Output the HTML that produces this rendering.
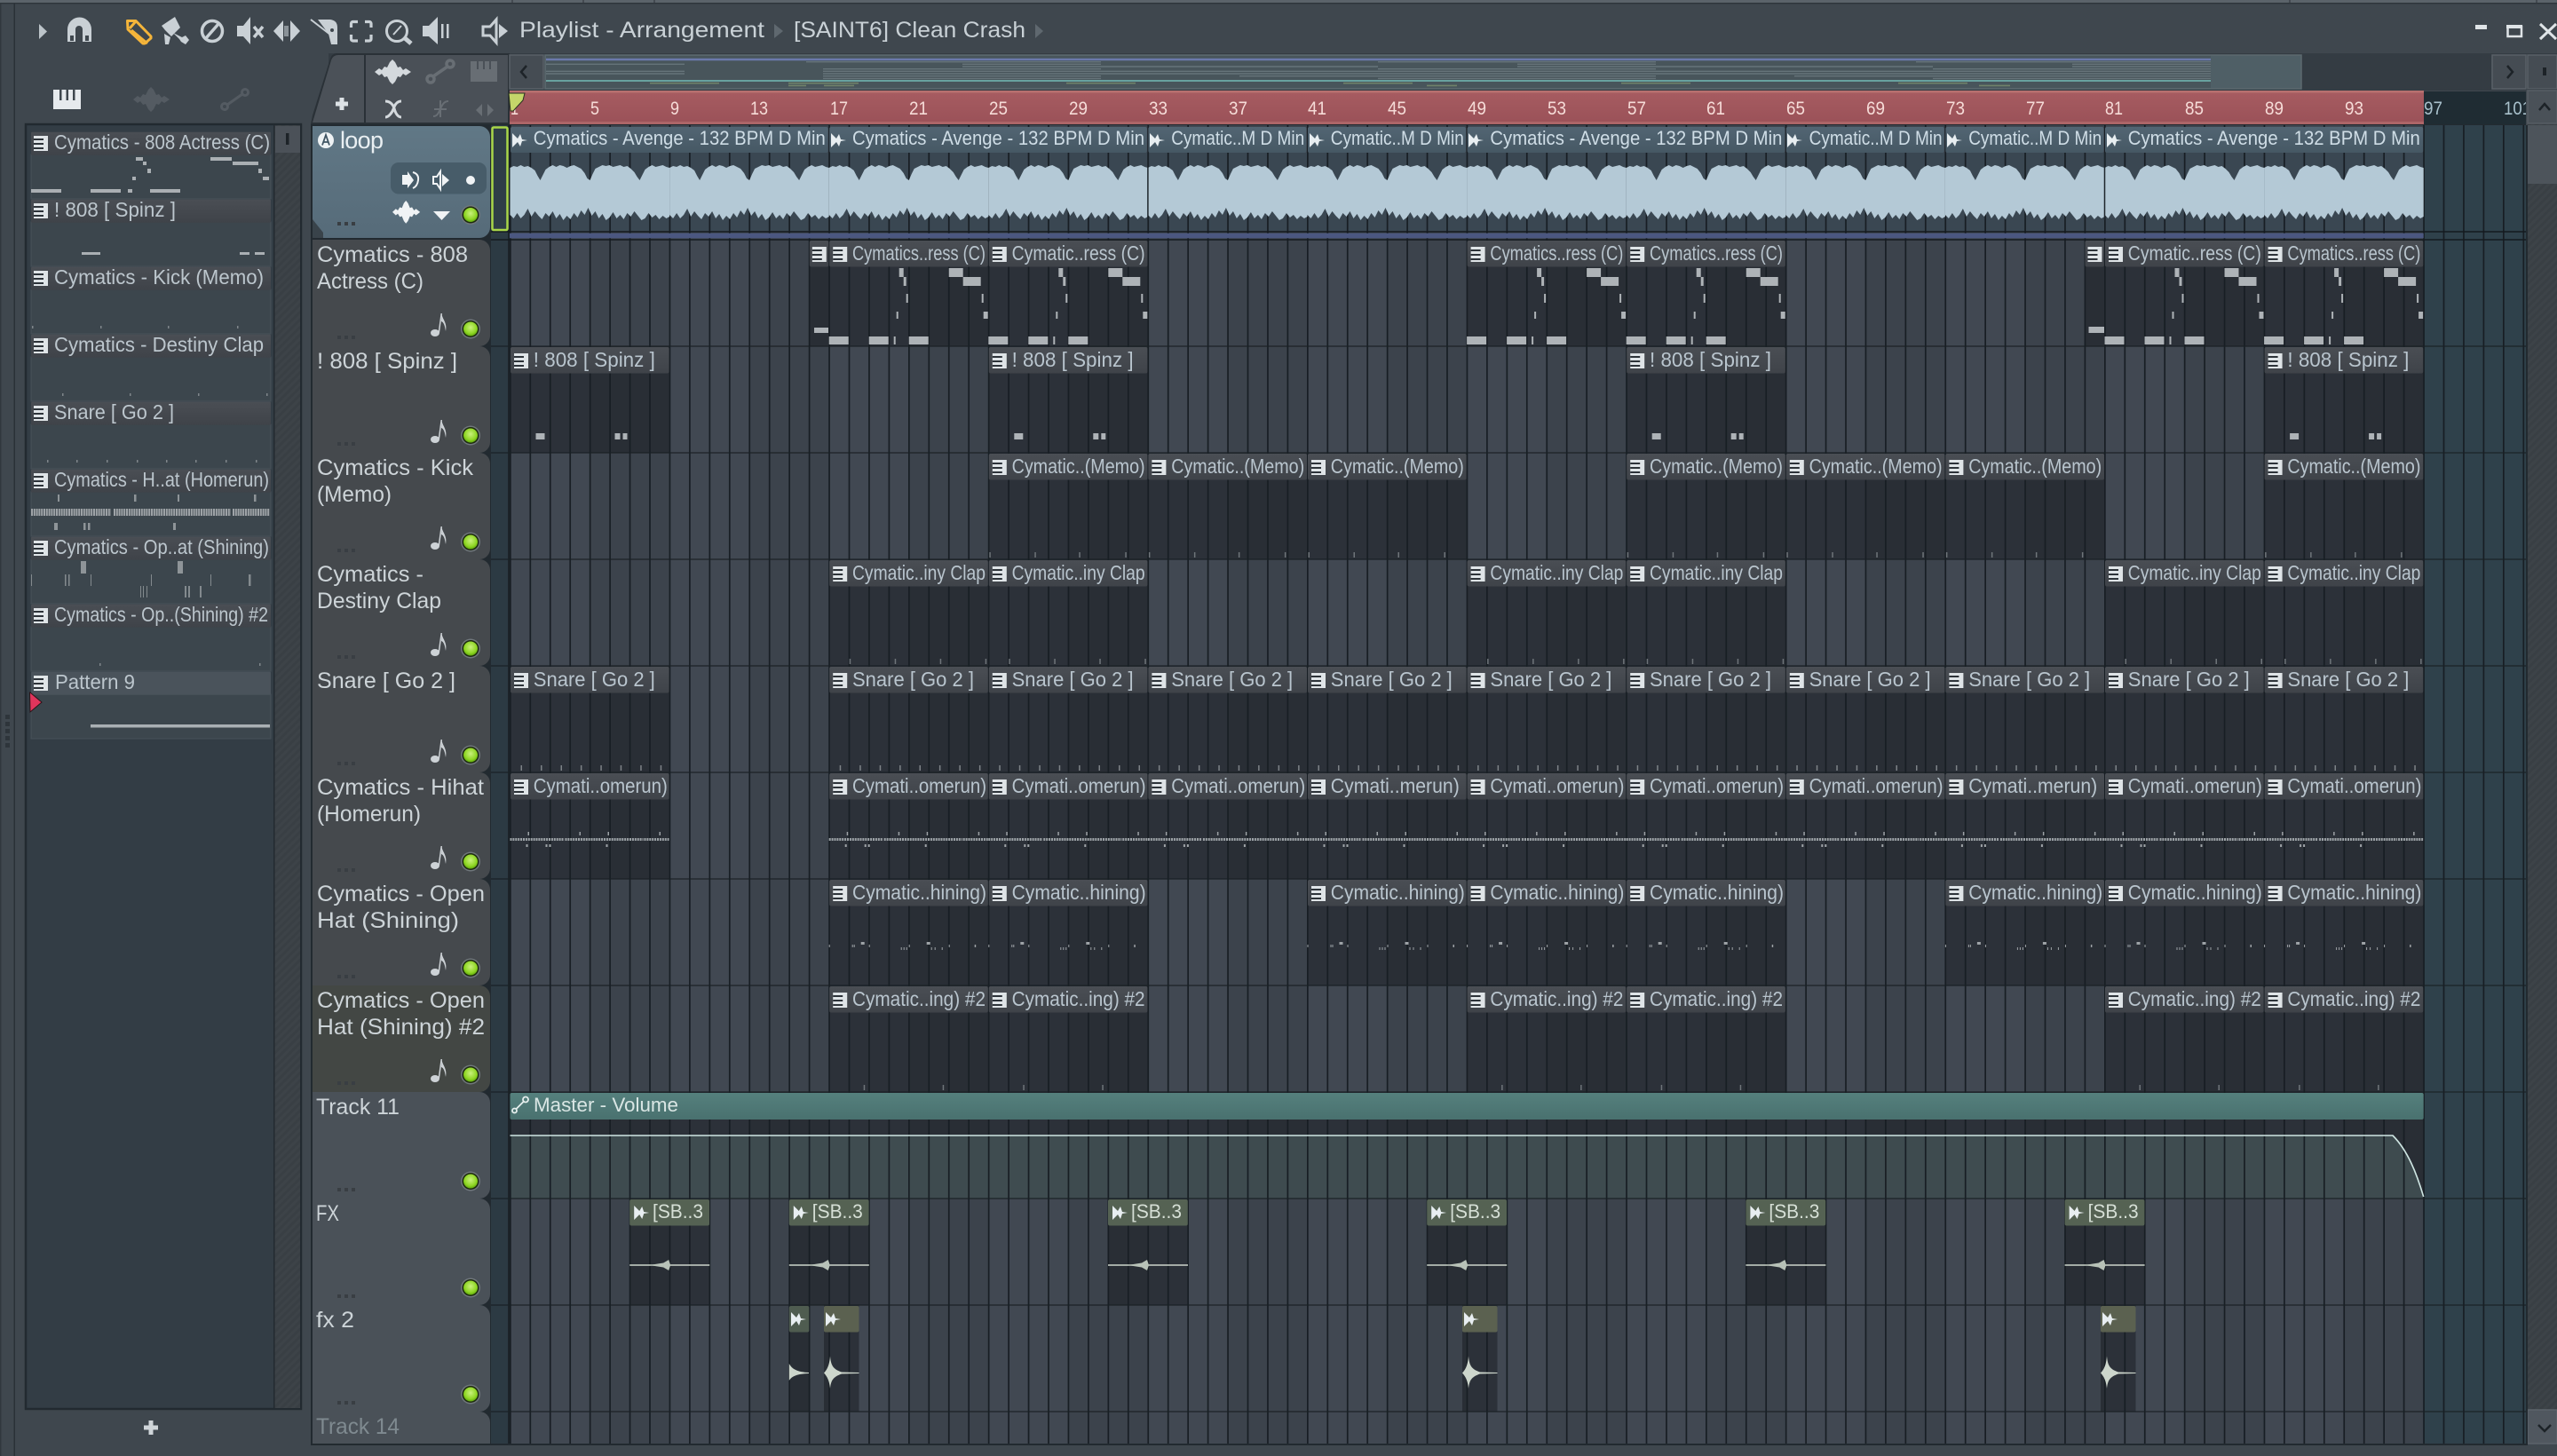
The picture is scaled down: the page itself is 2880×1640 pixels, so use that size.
<!DOCTYPE html>
<html><head><meta charset="utf-8"><title>Playlist - Arrangement</title>
<style>
html,body{margin:0;padding:0;background:#3f474e;width:2880px;height:1640px;overflow:hidden}
svg{display:block;position:absolute;left:0;top:0}
text{font-family:"Liberation Sans",sans-serif;white-space:pre}
.c{font-size:23px;fill:#b9c5ce}
.a{font-size:22px;fill:#cfdde6}
.h{font-size:25px;fill:#cdd4d8}
.r{font-size:21px;fill:#f6dcd8}
.p{font-size:23px;fill:#bcc6cd}
.g{font-size:22px;fill:#d6dfd6}
</style></head><body>
<svg width="2880" height="1640" viewBox="0 0 2880 1640" xmlns="http://www.w3.org/2000/svg">
<defs>
<linearGradient id="tg" x1="0" y1="0" x2="0" y2="1"><stop offset="0" stop-color="#4a4e54"/><stop offset="1" stop-color="#3f4349"/></linearGradient>
<linearGradient id="ag" x1="0" y1="0" x2="0" y2="1"><stop offset="0" stop-color="#526573"/><stop offset="1" stop-color="#465864"/></linearGradient>
<linearGradient id="tl" x1="0" y1="0" x2="0" y2="1"><stop offset="0" stop-color="#55807d"/><stop offset="1" stop-color="#49716f"/></linearGradient>
<linearGradient id="rg" x1="0" y1="0" x2="0" y2="1"><stop offset="0" stop-color="#a75c61"/><stop offset="1" stop-color="#9a5158"/></linearGradient>
<linearGradient id="lp" x1="0" y1="0" x2="0" y2="1"><stop offset="0" stop-color="#617886"/><stop offset="1" stop-color="#566b79"/></linearGradient>
<radialGradient id="ld" cx=".5" cy=".4" r=".6"><stop offset="0" stop-color="#c9f07c"/><stop offset=".7" stop-color="#8fd624"/><stop offset="1" stop-color="#5fa80c"/></radialGradient>
<pattern id="ht" width="6" height="6" patternUnits="userSpaceOnUse" patternTransform="rotate(45)"><rect width="6" height="6" fill="#3d4348"/><rect width="3" height="6" fill="#393f44"/></pattern>
<g id="pi"><rect width="16" height="17" fill="#dfe4e7"/><path d="M0 3h11v2H0zM0 8h11v2H0zM0 13h11v2H0z" fill="#2d3339"/></g>
<g id="t"><rect width="178.6" height="29.5" y="1" rx="2" fill="url(#tg)"/><use href="#pi" x="4" y="8"/></g>
<g id="ts"><rect width="21.4" height="29.5" y="1" rx="2" fill="url(#tg)"/><use href="#pi" x="3" y="8"/></g>
<path id="ar" d="M0-8 6-2 9-7 11-1 17 0 11 1 9 7 6 2 0 8Z" fill="#e8eef1"/>
<g id="wi"><path d="M0 14 5 10 8 12 11 8 14 9 17 3 20 0 23 3 26 9 29 8 32 12 35 10 41 14 35 18 32 16 29 20 26 19 23 25 20 28 17 25 14 19 11 20 8 16 5 18Z"/></g>
<g id="nt" fill="#cdd2d6"><ellipse cx="5" cy="21" rx="5" ry="4"/><path d="M8.500 21 11.500-1H13L10 21Z"/><path d="M12.500-1C13 6 19 9 17 19 C16 13 15 9 12 8Z"/></g>
<g id="led"><circle r="11" fill="#70777c"/><circle r="9.500" fill="#1d2a10"/><circle r="8" fill="url(#ld)"/></g>
<g id="dt"><path d="M380 108h4v4h-4zM388 108h4v4h-4zM396 108h4v4h-4z" fill="#393e43"/></g>
<path id="hd" d="M352 0H540a12 12 0 0 1 12 12V108a12 12 0 0 1-12 12H352Z"/>
<g id="n1" fill="#aeb3b7"><path d="M0 109h22v9H0zM45 109h22v9H45zM73 109h2v9h-2zM90 109h22v9H90zM76 81h2v8h-2zM87 61h2v10h-2zM84 42h3v10h-3zM79 32h5v10h-5zM135 32h16v10h-16zM151 42h20v10h-20zM172 61h2v10h-2zM174 81h5v8h-5z"/></g>
<g id="n2" fill="#aeb3b7"><path d="M29 98h10v7H29zM118 98h6v7h-6zM127 98h5v7h-5z"/></g>
<path id="n3" fill="#6f757a" d="M1 112h1.500v6H1zM52 112h1.500v6H52zM102 112h1.500v6H102zM154 112h1.500v6H154z"/>
<path id="n4" fill="#6f757a" d="M23 112h1.500v6H23zM74 112h1.500v6H74zM125 112h1.500v6H125zM176 112h1.500v6H176z"/>
<path id="n5" fill="#7d8287" d="M12 112h1.500v6H12zM34.500 112h1.500v6H34.500zM57 112h1.500v6H57zM79.400 112h1.500v6H79.400zM101.800 112h1.500v6H101.800zM124.200 112h1.500v6H124.200zM146.700 112h1.500v6H146.700zM169.200 112h1.500v6H169.200z"/>
<g id="n6"><path fill="none" stroke="#9ba1a5" stroke-width="3" stroke-dasharray="2 .9" d="M0 75.500H61M62 75.500H150M151 75.500H179"/><path fill="#9da2a6" d="M20 67h1.500v4H20zM78 67h1.500v4H78zM110 67h1.500v4H110zM168 67h1.500v4H168zM18 81h2v3h-2zM40 81h2v3h-2zM44 81h2v3h-2zM108 81h2v3h-2z"/></g>
<path id="n7" fill="#9da2a6" d="M36 71h4v3h-4zM110 71h4v3h-4zM0 74h1v3H0zM26 74h1v3h-1zM28 74h1v3h-1zM45 74h1v3h-1zM90 74h1v3h-1zM135 74h1v3h-1zM164 74h1.500v3H164zM81 77h1v3h-1zM84 77h1v3h-1zM87 77h1v3h-1zM115 77h1v3h-1zM119 77h1v3h-1zM127 77h1v3h-1z"/>
<path id="n8" fill="#6f757a" d="M39 112h1.500v6H39zM128 112h1.500v6H128z"/>
<path id="wt" fill="#b4c9d6" d="M0 189L4 187 8 188 12 186 16 188 20 187 24 189 28 192 31 198 34 203 37 197 40 191 44 188 48 186 52 188 56 186 60 187 64 189 68 187 72 186 76 188 80 190 84 195 87 201 90 203 93 196 96 190 100 188 104 186 108 187 112 186 116 188 120 187 124 186 128 188 132 187 136 190 140 194 143 199 146 203 149 197 152 191 156 188 160 186 164 188 168 187 172 186 176 188 179.600 189L179.600 244 176 246 172 243 168 247 164 242 160 245 156 240 152 246 148 248 144 243 140 238 136 244 132 240 128 247 124 242 120 246 116 239 112 245 108 248 104 241 100 246 96 238 92 243 88 234 84 242 80 237 76 245 72 240 68 247 64 243 60 248 56 241 52 246 48 238 44 244 40 240 36 247 32 243 28 238 24 244 20 235 16 242 12 246 8 240 4 246 0 242Z"/>
<g id="sb"><rect y="1" width="89.800" height="29.500" rx="2" fill="#556253"/><use href="#ar" x="5" y="16"/><path d="M0 75H90" stroke="#cdd6cc" stroke-width="1.500"/><path d="M22 75 38 72.500 44 69 46 75 44 81 38 77.500Z" fill="#b8c2b8"/></g>
</defs>

<!-- window background -->
<rect width="2880" height="1640" fill="#3f474e"/>
<rect width="2880" height="3" fill="#5b636a"/>
<rect y="3" width="2880" height="1.500" fill="#2f363c"/>
<path d="M577 0v3M657 0v3M737 0v3M2579 0v3M2857 0v3" stroke="#3c4349" stroke-width="1.500"/>
<rect x="0" y="4" width="1.500" height="1636" fill="#30373d"/>
<rect x="15.500" y="4" width="1.500" height="1636" fill="#2a3137"/>
<path d="M6 805h5v5H6zM6 813h5v5H6zM6 821h5v5H6zM6 829h5v5H6zM6 837h5v5H6z" fill="#2e353b"/>

<!-- top icons -->
<g fill="#c9d0d5">
<polygon points="44,27 53,35.500 44,44" fill="#bcc4c9"/>
<path d="M76 47V33a13.500 13.500 0 0 1 27 0V47H93V33a3.500 3.500 0 0 0-8 0V47Z"/>
<path d="M79 40h4v6h-4zM96 40h4v6h-4z" fill="#3f474e"/>
<path d="M143.500 23.500H153L170 41V43L163 49H161L144 33ZM146 32l7-8M148 34 166 49" fill="none" stroke="#f5b53a" stroke-width="3" stroke-linejoin="round"/>
<path d="M182 29 197 19 203 31 193 41 186 34ZM195 37 205 42 209 40 213 45 209 50 204 47 202 44ZM185 38 192 42 190 50 186 50Z"/>
<circle cx="239" cy="35" r="11.500" fill="none" stroke="#c9d0d5" stroke-width="3.500"/>
<path d="M232 43 246 27" stroke="#c9d0d5" stroke-width="3.500"/>
<path d="M267 29H274L282 19V50L274 41H267Z"/>
<path d="M286 30 296 42M296 30 286 42" stroke="#c9d0d5" stroke-width="3.500"/>
<polygon points="308,35 319,23 319,47"/><polygon points="338,35 327,23 327,47"/>
<path d="M320 29h5v12h-5z" opacity=".55"/>
<path d="M350 22 372 39" stroke="#c9d0d5" stroke-width="2"/>
<path d="M358 22H372Q380 23 380 31V50H373L370 38Z"/><circle cx="374" cy="34" r="2" fill="#3f474e"/>
<path d="M395.500 31V26.500a2 2 0 0 1 2-2H403M411 24.500H416a2 2 0 0 1 2 2V31M418 39V44a2 2 0 0 1-2 2H411M403 46H397.500a2 2 0 0 1-2-2V39" fill="none" stroke="#c9d0d5" stroke-width="3.200"/>
<circle cx="447" cy="35" r="11.500" fill="none" stroke="#c9d0d5" stroke-width="3"/>
<path d="M443 39 452 29" stroke="#c9d0d5" stroke-width="2"/>
<path d="M456 43 463 49" stroke="#c9d0d5" stroke-width="5"/>
<path d="M476 29H483L493 19V50L483 41H476Z"/>
<path d="M497 27h2.500v16H497zM503 27h2.500v16H503z"/>
<path d="M544 30H552L559 22V48L552 40H544Z" fill="none" stroke="#c9d0d5" stroke-width="3"/>
<polygon points="562,27 572,35 562,43"/>
<path d="M2788 28h13v5h-13z" fill="#dfe4e7"/>
<path d="M2824.500 30h15.500v11h-15.500z" fill="none" stroke="#dfe4e7" stroke-width="2.500"/><path d="M2823 28h18v4h-18z" fill="#dfe4e7"/>
<path d="M2861 27 2879 44M2879 27 2861 44" stroke="#dfe4e7" stroke-width="3"/>
</g>
<text x="585" y="42" font-size="25" fill="#c9d1d6" textLength="276" lengthAdjust="spacingAndGlyphs">Playlist - Arrangement</text>
<polygon points="872,27 882,35 872,43" fill="#5f686f"/>
<text x="894" y="42" font-size="25" fill="#c9d1d6" textLength="261" lengthAdjust="spacingAndGlyphs">[SAINT6] Clean Crash</text>
<polygon points="1166,27 1175,35 1166,43" fill="#5f686f"/>

<!-- toolbar strip -->
<rect x="370" y="60" width="2510" height="42" fill="#343c43"/>
<rect x="350" y="139" width="224" height="3" fill="#252c32"/>
<path d="M350 140 352 130 372 66Q374 60 380 60H574V140Z" fill="#2a3137"/>
<path d="M352 138 373 68Q375 62 381 62H410V138Z" fill="#4b5158"/>
<rect x="412" y="62" width="160" height="76" fill="#4a5057"/>
<path d="M378 114.500h14v5h-14zM382.500 110h5v14h-5z" fill="#dde2e6"/>
<use href="#wi" x="422" y="67" fill="#d4d9dd"/>
<g fill="none" stroke="#686e74" stroke-width="3.500"><circle cx="485" cy="89" r="4"/><circle cx="507" cy="72" r="4"/><path d="M488 86 504 75"/></g>
<path d="M530 69h30v23h-30z" fill="#686e74"/><path d="M537 69h2v9h-2zM544 69h2v9h-2zM551 69h2v9h-2z" fill="#4a5057"/>
<path d="M434 114C442 114 444 122 444 122S446 132 452 132M452 114C446 114 444 120 443 123S438 132 434 132" fill="none" stroke="#d4d9dd" stroke-width="3"/>
<path d="M488 131C497 131 495 114 505 114M489 123h14M496 113v19" fill="none" stroke="#686e74" stroke-width="2"/>
<path d="M536 124 543 117V131ZM556 124 549 117V131Z" fill="#686e74"/>
<rect x="574" y="62" width="38" height="38" fill="#454c53" stroke="#596067" stroke-width="1.500"/>
<path d="M593 74 587 81 593 88" fill="none" stroke="#1d2328" stroke-width="2.500"/>

<!-- overview -->
<rect x="614" y="62" width="1978" height="38" fill="#4f5f66" stroke="#5d696f" stroke-width="1.500"/>
<rect x="615" y="63" width="1875" height="36" fill="#48555b"/>
<path d="M615 67H2490" stroke="#6b79ab" stroke-width="2.500"/>
<path d="M908 69.700H1240M1552 69.700H1865M2158 69.700H2490M615 72.300H771M1084 72.300H1240M1709 72.300H1865M2334 72.300H2490M1084 75H1552M1709 75H2177M2334 75H2490M927 77.700H1240M1552 77.700H1865M2177 77.700H2490M615 80.300H771M927 80.300H2490M615 83H771M927 83H2490M927 85.700H1240M1396 85.700H1865M2021 85.700H2490M927 88.400H1240M1552 88.400H1865M2177 88.400H2490" stroke="#66747a" stroke-width="1.400"/>
<path d="M615 91H2490" stroke="#72bcb6" stroke-width="1.600"/>
<path d="M732 93.700H810M888 93.700H967M1201 93.700H1279M1513 93.700H1591M1826 93.700H1904M2138 93.700H2216" stroke="#70826a" stroke-width="1.600"/>
<path d="M888 96.400H908M928 96.400H962M1607 96.400H1641M2229 96.400H2264" stroke="#70826a" stroke-width="1.600"/>
<rect x="2807" y="62" width="38" height="38" fill="#454c53" stroke="#596067" stroke-width="1.500"/>
<path d="M2824 74 2830 81 2824 88" fill="none" stroke="#1d2328" stroke-width="2.500"/>
<rect x="2847" y="62" width="33" height="38" fill="#454c53" stroke="#596067" stroke-width="1.500"/>
<rect x="2864" y="76" width="4" height="9" fill="#1d2328"/>

<!-- left picker -->
<path d="M60 101h31v22H60z" fill="#e6eaed"/><path d="M67 101h2.500v12H67zM74.500 101h2.500v12h-2.500zM82 101h2.500v12H82z" fill="#3f474e"/>
<use href="#wi" x="150" y="98" fill="#545b62"/>
<g fill="none" stroke="#545b62" stroke-width="3"><circle cx="253" cy="120" r="3.500"/><circle cx="276" cy="104" r="3.500"/><path d="M256 118 273 106"/></g>
<rect x="29" y="140" width="310" height="1447" fill="#333d45" stroke="#222a30" stroke-width="2.500"/>
<rect x="309" y="141" width="29" height="1445" fill="url(#ht)"/>
<rect x="308" y="141" width="1.500" height="1445" fill="#222a30"/>
<rect x="310" y="142" width="28" height="30" fill="#4b5158"/>
<rect x="322" y="150" width="3.500" height="13" fill="#1d2328"/>
<g fill="#3c464d" stroke="#475159" stroke-width="1">
<rect x="35" y="174" width="270" height="50"/><rect x="35" y="250" width="270" height="50"/><rect x="35" y="326" width="270" height="50"/><rect x="35" y="402" width="270" height="50"/><rect x="35" y="478" width="270" height="50"/><rect x="35" y="554" width="270" height="50"/><rect x="35" y="630" width="270" height="50"/><rect x="35" y="706" width="270" height="50"/><rect x="35" y="782" width="270" height="50"/>
</g>
<g fill="url(#tg)"><rect x="35" y="148.700" width="270" height="26" rx="1"/><rect x="35" y="224.700" width="270" height="26" rx="1"/><rect x="35" y="300.700" width="270" height="26" rx="1"/><rect x="35" y="376.700" width="270" height="26" rx="1"/><rect x="35" y="452.700" width="270" height="26" rx="1"/><rect x="35" y="528.700" width="270" height="26" rx="1"/><rect x="35" y="604.700" width="270" height="26" rx="1"/><rect x="35" y="680.700" width="270" height="26" rx="1"/></g>
<rect x="35" y="756.700" width="270" height="26" rx="1" fill="#4a535b"/>
<g><use href="#pi" x="38" y="153"/><use href="#pi" x="38" y="229"/><use href="#pi" x="38" y="305"/><use href="#pi" x="38" y="381"/><use href="#pi" x="38" y="457"/><use href="#pi" x="38" y="533"/><use href="#pi" x="38" y="609"/><use href="#pi" x="38" y="685"/><use href="#pi" x="38" y="761"/></g>
<text class="p" x="61" y="168" textLength="243" lengthAdjust="spacingAndGlyphs">Cymatics - 808 Actress (C)</text>
<text class="p" x="61" y="244" textLength="137" lengthAdjust="spacingAndGlyphs">! 808 [ Spinz ]</text>
<text class="p" x="61" y="320" textLength="236" lengthAdjust="spacingAndGlyphs">Cymatics - Kick (Memo)</text>
<text class="p" x="61" y="396" textLength="236" lengthAdjust="spacingAndGlyphs">Cymatics - Destiny Clap</text>
<text class="p" x="61" y="472" textLength="135" lengthAdjust="spacingAndGlyphs">Snare [ Go 2 ]</text>
<text class="p" x="61" y="548" textLength="242" lengthAdjust="spacingAndGlyphs">Cymatics - H..at (Homerun)</text>
<text class="p" x="61" y="624" textLength="242" lengthAdjust="spacingAndGlyphs">Cymatics - Op..at (Shining)</text>
<text class="p" x="61" y="700" textLength="241" lengthAdjust="spacingAndGlyphs">Cymatics - Op..(Shining) #2</text>
<text class="p" x="62" y="776" textLength="90" lengthAdjust="spacingAndGlyphs">Pattern 9</text>
<path fill="#aaafb3" d="M35 213h34v4H35zM102 213h34v4h-34zM144 213h5v4h-5zM169 213h34v4h-34zM149 199h4v4h-4zM166 190h4v5h-4zM153 177h8v4h-8zM161 182h4v4h-4zM237 177h24v4h-24zM262 182h29v4h-29zM291 190h4v5h-4zM296 199h7v4h-7zM92 284h21v3H92zM270 284h11v3h-11zM287 284h11v3h-11z"/>
<path fill="#7f868b" d="M36 367h1.500v3H36zM113 367h1.500v3H113zM189 367h1.500v3H189zM267 367h1.500v3H267zM70 443h1.500v3H70zM146 443h1.500v3H146zM223 443h1.500v3H223zM300 443h1.500v3H300zM53 518h1.500v3H53zM86 518h1.500v3H86zM120 518h1.500v3H120zM154 518h1.500v3H154zM187 518h1.500v3H187zM220 518h1.500v3H220zM254 518h1.500v3H254zM288 518h1.500v3H288zM112 747h1.500v3H112zM292 747h1.500v3H292z"/>
<path fill="none" stroke="#9ea3a7" stroke-width="8" stroke-dasharray="2 .8" d="M35 577H125M128 577H260M262 577H304"/>
<path fill="#8e9498" d="M65 557h2v8h-2zM151 557h2.500v8H151zM200 557h2v8h-2zM286 557h2.500v8H286zM61 589h4v8h-4zM94 589h2.500v8H94zM99 589h2.500v8H99zM195 589h3v8h-3zM91 632h6v14h-6zM200 632h6v14h-6z"/>
<path fill="#838a8e" d="M35 647h1v13h-1zM73 647h1.500v13H73zM77 647h1.500v13H77zM102 647h1v13h-1zM170 647h1v13h-1zM237 647h1v13h-1zM280 647h2.500v13H280zM158 660h1v13h-1zM161 660h1v13h-1zM165 660h1v13h-1zM208 660h2v13h-2zM212 660h2v13h-2zM225 660h2v13h-2z"/>
<rect x="102" y="816" width="202" height="3.500" fill="#aab0b4"/>
<path d="M34 780 47 791 34 802 33.500 780Z" fill="#e0355c" stroke="#2a1418" stroke-width="1"/>
<path d="M162 1605.500h16v5h-16zM167.500 1600h5v16h-5z" fill="#cfd5d9"/>

<!-- playlist main -->
<rect x="350" y="140" width="2497" height="1488" fill="#222a30"/>
<rect x="574" y="141" width="2156" height="1485" fill="#3c434c"/>
<line x1="574.500" y1="883.500" x2="2730" y2="883.500" stroke="#414852" stroke-width="1485" stroke-dasharray="89.800 89.800"/>
<rect x="2730" y="141" width="115" height="1485" fill="#2f414b"/>
<rect x="553" y="141" width="20" height="1485" fill="#2c3a43"/>

<!-- ruler -->
<rect x="574" y="102" width="2156" height="38" fill="url(#rg)"/>
<rect x="574" y="102" width="2156" height="2.500" fill="#b8706f"/>
<rect x="574" y="137" width="2156" height="3" fill="#ad6568"/>
<rect x="2730" y="103" width="117" height="37" fill="#1f2c33"/>
<g>
<text class="r" x="575" y="129" textLength="9" lengthAdjust="spacingAndGlyphs">1</text>
<text class="r" x="665" y="129" textLength="10" lengthAdjust="spacingAndGlyphs">5</text>
<text class="r" x="755" y="129" textLength="10" lengthAdjust="spacingAndGlyphs">9</text>
<text class="r" x="845" y="129" textLength="20" lengthAdjust="spacingAndGlyphs">13</text>
<text class="r" x="935" y="129" textLength="20" lengthAdjust="spacingAndGlyphs">17</text>
<text class="r" x="1024" y="129" textLength="21" lengthAdjust="spacingAndGlyphs">21</text>
<text class="r" x="1114" y="129" textLength="21" lengthAdjust="spacingAndGlyphs">25</text>
<text class="r" x="1204" y="129" textLength="21" lengthAdjust="spacingAndGlyphs">29</text>
<text class="r" x="1294" y="129" textLength="21" lengthAdjust="spacingAndGlyphs">33</text>
<text class="r" x="1384" y="129" textLength="21" lengthAdjust="spacingAndGlyphs">37</text>
<text class="r" x="1473" y="129" textLength="21" lengthAdjust="spacingAndGlyphs">41</text>
<text class="r" x="1563" y="129" textLength="21" lengthAdjust="spacingAndGlyphs">45</text>
<text class="r" x="1653" y="129" textLength="21" lengthAdjust="spacingAndGlyphs">49</text>
<text class="r" x="1743" y="129" textLength="21" lengthAdjust="spacingAndGlyphs">53</text>
<text class="r" x="1833" y="129" textLength="21" lengthAdjust="spacingAndGlyphs">57</text>
<text class="r" x="1922" y="129" textLength="21" lengthAdjust="spacingAndGlyphs">61</text>
<text class="r" x="2012" y="129" textLength="21" lengthAdjust="spacingAndGlyphs">65</text>
<text class="r" x="2102" y="129" textLength="21" lengthAdjust="spacingAndGlyphs">69</text>
<text class="r" x="2192" y="129" textLength="21" lengthAdjust="spacingAndGlyphs">73</text>
<text class="r" x="2282" y="129" textLength="21" lengthAdjust="spacingAndGlyphs">77</text>
<text class="r" x="2371" y="129" textLength="20" lengthAdjust="spacingAndGlyphs">81</text>
<text class="r" x="2461" y="129" textLength="21" lengthAdjust="spacingAndGlyphs">85</text>
<text class="r" x="2551" y="129" textLength="21" lengthAdjust="spacingAndGlyphs">89</text>
<text class="r" x="2641" y="129" textLength="21" lengthAdjust="spacingAndGlyphs">93</text>
<text class="r" x="2730" y="129" textLength="21" style="fill:#a9c1cc" lengthAdjust="spacingAndGlyphs">97</text>
<text class="r" x="2820" y="129" textLength="31" style="fill:#a9c1cc" lengthAdjust="spacingAndGlyphs">101</text>
</g>
<path d="M573 105H591L589 113 578 125 575 125Z" fill="#c5d66a" stroke="#2a3320" stroke-width="1"/>

<!-- clip bodies -->
<path fill="#0c1014" fill-opacity=".4" d="M911.300 270H1292.900V390H911.300ZM1652.100 270H2011.300V390H1652.100ZM2348 270H2729.700V390H2348ZM574.500 390H754.100V510H574.500ZM1113.300 390H1292.900V510H1113.300ZM1831.700 390H2011.300V510H1831.700ZM2550.100 390H2729.700V510H2550.100ZM1113.300 510H1652.100V630H1113.300ZM1831.700 510H2370.500V630H1831.700ZM2550.100 510H2729.700V630H2550.100ZM933.700 630H1292.900V750H933.700ZM1652.100 630H2011.300V750H1652.100ZM2370.500 630H2729.700V750H2370.500ZM574.500 750H754.100V870H574.500ZM933.700 750H2729.700V870H933.700ZM574.500 870H754.100V990H574.500ZM933.700 870H2729.700V990H933.700ZM933.700 990H1292.900V1110H933.700ZM1472.500 990H2011.300V1110H1472.500ZM2190.900 990H2729.700V1110H2190.900ZM933.700 1110H1292.900V1230H933.700ZM1652.100 1110H2011.300V1230H1652.100ZM2370.500 1110H2729.700V1230H2370.500ZM574.500 1230H2729.700V1350H574.500ZM709.200 1350H799V1470H709.200ZM888.800 1350H978.600V1470H888.800ZM1248 1350H1337.800V1470H1248ZM1607.200 1350H1697V1470H1607.200ZM1966.400 1350H2056.200V1470H1966.400ZM2325.600 1350H2415.400V1470H2325.600ZM888.800 1470H911.300V1590H888.800ZM928 1470H967.500V1590H928ZM1647 1470H1686.500V1590H1647ZM2366 1470H2405.500V1590H2366Z"/>
<rect x="574.500" y="172" width="2155.200" height="88" fill="#3a4752"/>
<!-- automation fill -->
<path d="M574.500 1279H2695C2712 1296 2722 1322 2729.700 1348V1350H574.500Z" fill="#4c5d5f" fill-opacity=".62"/>
<!-- grid lines -->
<line x1="574" y1="883.500" x2="2845" y2="883.500" stroke="#181e24" stroke-width="1485" stroke-dasharray="1.700 20.750"/>
<rect x="572" y="141" width="2" height="1485" fill="#1c2329"/>
<!-- row lines -->
<path d="M553 390H2845M553 510H2845M553 630H2845M553 750H2845M553 870H2845M553 990H2845M553 1110H2845M553 1230H2845M553 1350H2845M553 1470H2845M553 1590H2845" stroke="#1a2026" stroke-opacity=".8" stroke-width="1.500"/>
<path d="M553 270H2845M553 261H2845" stroke="#141a1f" stroke-width="1.500"/>
<path d="M574 265.500H2729.700" stroke="#4b5780" stroke-width="5.500"/>
<!-- wave -->
<g><use href="#wt" x="574.500"/><use href="#wt" x="754.100"/><use href="#wt" x="933.700"/><use href="#wt" x="1113.300"/><use href="#wt" x="1292.900"/><use href="#wt" x="1472.500"/><use href="#wt" x="1652.100"/><use href="#wt" x="1831.700"/><use href="#wt" x="2011.300"/><use href="#wt" x="2190.900"/><use href="#wt" x="2370.500"/><use href="#wt" x="2550.100"/></g>
<path d="M1292.900 172V248M2370.500 172V248" stroke="#1d252b" stroke-width="1.500"/>

<!-- audio titles -->
<g fill="url(#ag)">
<rect x="575" y="143" width="357.700" height="29" rx="2"/><rect x="934.200" y="143" width="357.700" height="29" rx="2"/><rect x="1293.400" y="143" width="178" height="29" rx="2"/><rect x="1473" y="143" width="178" height="29" rx="2"/><rect x="1652.600" y="143" width="357.700" height="29" rx="2"/><rect x="2011.800" y="143" width="178" height="29" rx="2"/><rect x="2191.400" y="143" width="178" height="29" rx="2"/><rect x="2371" y="143" width="358.200" height="29" rx="2"/>
</g>
<g><use href="#ar" x="577" y="158"/><use href="#ar" x="936" y="158"/><use href="#ar" x="1295" y="158"/><use href="#ar" x="1475" y="158"/><use href="#ar" x="1654" y="158"/><use href="#ar" x="2013" y="158"/><use href="#ar" x="2193" y="158"/><use href="#ar" x="2373" y="158"/></g>
<text class="a" x="600.800" y="163" textLength="329" lengthAdjust="spacingAndGlyphs">Cymatics - Avenge - 132 BPM D Min</text>
<text class="a" x="960" y="163" textLength="329" lengthAdjust="spacingAndGlyphs">Cymatics - Avenge - 132 BPM D Min</text>
<text class="a" x="1319.200" y="163" textLength="150" lengthAdjust="spacingAndGlyphs">Cymatic..M D Min</text>
<text class="a" x="1498.800" y="163" textLength="150" lengthAdjust="spacingAndGlyphs">Cymatic..M D Min</text>
<text class="a" x="1678.400" y="163" textLength="329" lengthAdjust="spacingAndGlyphs">Cymatics - Avenge - 132 BPM D Min</text>
<text class="a" x="2037.600" y="163" textLength="150" lengthAdjust="spacingAndGlyphs">Cymatic..M D Min</text>
<text class="a" x="2217.200" y="163" textLength="150" lengthAdjust="spacingAndGlyphs">Cymatic..M D Min</text>
<text class="a" x="2396.800" y="163" textLength="329" lengthAdjust="spacingAndGlyphs">Cymatics - Avenge - 132 BPM D Min</text>

<!-- 808 Actress -->
<g><use href="#ts" x="911.800" y="270"/><use href="#t" x="934.200" y="270"/><use href="#t" x="1113.800" y="270"/><use href="#t" x="1652.600" y="270"/><use href="#t" x="1832.200" y="270"/><use href="#ts" x="2348.500" y="270"/><use href="#t" x="2371" y="270"/><use href="#t" x="2550.600" y="270"/></g>
<g transform="translate(0 270)"><use href="#n1" x="933.700"/><use href="#n1" x="1113.300"/><use href="#n1" x="1652.100"/><use href="#n1" x="1831.700"/><use href="#n1" x="2370.500"/><use href="#n1" x="2550.100"/></g>
<path fill="#aeb3b7" d="M917 369h16v6h-16zM2352.500 368h17.500v7h-17.500z"/>
<text class="c" x="960" y="293" textLength="150" lengthAdjust="spacingAndGlyphs">Cymatics..ress (C)</text>
<text class="c" x="1139.600" y="293" textLength="150" lengthAdjust="spacingAndGlyphs">Cymatic..ress (C)</text>
<text class="c" x="1678.400" y="293" textLength="150" lengthAdjust="spacingAndGlyphs">Cymatics..ress (C)</text>
<text class="c" x="1858" y="293" textLength="150" lengthAdjust="spacingAndGlyphs">Cymatics..ress (C)</text>
<text class="c" x="2396.800" y="293" textLength="150" lengthAdjust="spacingAndGlyphs">Cymatic..ress (C)</text>
<text class="c" x="2576.400" y="293" textLength="150" lengthAdjust="spacingAndGlyphs">Cymatics..ress (C)</text>

<!-- Spinz -->
<g><use href="#t" x="575" y="390"/><use href="#t" x="1113.800" y="390"/><use href="#t" x="1832.200" y="390"/><use href="#t" x="2550.600" y="390"/></g>
<g transform="translate(0 390)"><use href="#n2" x="574.500"/><use href="#n2" x="1113.300"/><use href="#n2" x="1831.700"/><use href="#n2" x="2550.100"/></g>
<text class="c" x="600.800" y="413" textLength="137" lengthAdjust="spacingAndGlyphs">! 808 [ Spinz ]</text>
<text class="c" x="1139.600" y="413" textLength="137" lengthAdjust="spacingAndGlyphs">! 808 [ Spinz ]</text>
<text class="c" x="1858" y="413" textLength="137" lengthAdjust="spacingAndGlyphs">! 808 [ Spinz ]</text>
<text class="c" x="2576.400" y="413" textLength="137" lengthAdjust="spacingAndGlyphs">! 808 [ Spinz ]</text>

<!-- Kick -->
<g><use href="#t" x="1113.800" y="510"/><use href="#t" x="1293.400" y="510"/><use href="#t" x="1473" y="510"/><use href="#t" x="1832.200" y="510"/><use href="#t" x="2011.800" y="510"/><use href="#t" x="2191.400" y="510"/><use href="#t" x="2550.600" y="510"/></g>
<g transform="translate(0 510)"><use href="#n3" x="1113.300"/><use href="#n3" x="1292.900"/><use href="#n3" x="1472.500"/><use href="#n3" x="1831.700"/><use href="#n3" x="2011.300"/><use href="#n3" x="2190.900"/><use href="#n3" x="2550.100"/></g>
<text class="c" x="1139.600" y="533" textLength="150" lengthAdjust="spacingAndGlyphs">Cymatic..(Memo)</text>
<text class="c" x="1319.200" y="533" textLength="150" lengthAdjust="spacingAndGlyphs">Cymatic..(Memo)</text>
<text class="c" x="1498.800" y="533" textLength="150" lengthAdjust="spacingAndGlyphs">Cymatic..(Memo)</text>
<text class="c" x="1858" y="533" textLength="150" lengthAdjust="spacingAndGlyphs">Cymatic..(Memo)</text>
<text class="c" x="2037.600" y="533" textLength="150" lengthAdjust="spacingAndGlyphs">Cymatic..(Memo)</text>
<text class="c" x="2217.200" y="533" textLength="150" lengthAdjust="spacingAndGlyphs">Cymatic..(Memo)</text>
<text class="c" x="2576.400" y="533" textLength="150" lengthAdjust="spacingAndGlyphs">Cymatic..(Memo)</text>

<!-- Destiny -->
<g><use href="#t" x="934.200" y="630"/><use href="#t" x="1113.800" y="630"/><use href="#t" x="1652.600" y="630"/><use href="#t" x="1832.200" y="630"/><use href="#t" x="2371" y="630"/><use href="#t" x="2550.600" y="630"/></g>
<g transform="translate(0 630)"><use href="#n4" x="933.700"/><use href="#n4" x="1113.300"/><use href="#n4" x="1652.100"/><use href="#n4" x="1831.700"/><use href="#n4" x="2370.500"/><use href="#n4" x="2550.100"/></g>
<text class="c" x="960" y="653" textLength="150" lengthAdjust="spacingAndGlyphs">Cymatic..iny Clap</text>
<text class="c" x="1139.600" y="653" textLength="150" lengthAdjust="spacingAndGlyphs">Cymatic..iny Clap</text>
<text class="c" x="1678.400" y="653" textLength="150" lengthAdjust="spacingAndGlyphs">Cymatic..iny Clap</text>
<text class="c" x="1858" y="653" textLength="150" lengthAdjust="spacingAndGlyphs">Cymatic..iny Clap</text>
<text class="c" x="2396.800" y="653" textLength="150" lengthAdjust="spacingAndGlyphs">Cymatic..iny Clap</text>
<text class="c" x="2576.400" y="653" textLength="150" lengthAdjust="spacingAndGlyphs">Cymatic..iny Clap</text>

<!-- Snare -->
<g><use href="#t" x="575" y="750"/><use href="#t" x="934.200" y="750"/><use href="#t" x="1113.800" y="750"/><use href="#t" x="1293.400" y="750"/><use href="#t" x="1473" y="750"/><use href="#t" x="1652.600" y="750"/><use href="#t" x="1832.200" y="750"/><use href="#t" x="2011.800" y="750"/><use href="#t" x="2191.400" y="750"/><use href="#t" x="2371" y="750"/><use href="#t" x="2550.600" y="750"/></g>
<g transform="translate(0 750)"><use href="#n5" x="574.500"/><use href="#n5" x="933.700"/><use href="#n5" x="1113.300"/><use href="#n5" x="1292.900"/><use href="#n5" x="1472.500"/><use href="#n5" x="1652.100"/><use href="#n5" x="1831.700"/><use href="#n5" x="2011.300"/><use href="#n5" x="2190.900"/><use href="#n5" x="2370.500"/><use href="#n5" x="2550.100"/></g>
<text class="c" x="600.800" y="773" textLength="137" lengthAdjust="spacingAndGlyphs">Snare [ Go 2 ]</text>
<text class="c" x="960" y="773" textLength="137" lengthAdjust="spacingAndGlyphs">Snare [ Go 2 ]</text>
<text class="c" x="1139.600" y="773" textLength="137" lengthAdjust="spacingAndGlyphs">Snare [ Go 2 ]</text>
<text class="c" x="1319.200" y="773" textLength="137" lengthAdjust="spacingAndGlyphs">Snare [ Go 2 ]</text>
<text class="c" x="1498.800" y="773" textLength="137" lengthAdjust="spacingAndGlyphs">Snare [ Go 2 ]</text>
<text class="c" x="1678.400" y="773" textLength="137" lengthAdjust="spacingAndGlyphs">Snare [ Go 2 ]</text>
<text class="c" x="1858" y="773" textLength="137" lengthAdjust="spacingAndGlyphs">Snare [ Go 2 ]</text>
<text class="c" x="2037.600" y="773" textLength="137" lengthAdjust="spacingAndGlyphs">Snare [ Go 2 ]</text>
<text class="c" x="2217.200" y="773" textLength="137" lengthAdjust="spacingAndGlyphs">Snare [ Go 2 ]</text>
<text class="c" x="2396.800" y="773" textLength="137" lengthAdjust="spacingAndGlyphs">Snare [ Go 2 ]</text>
<text class="c" x="2576.400" y="773" textLength="137" lengthAdjust="spacingAndGlyphs">Snare [ Go 2 ]</text>

<!-- Hihat -->
<g><use href="#t" x="575" y="870"/><use href="#t" x="934.200" y="870"/><use href="#t" x="1113.800" y="870"/><use href="#t" x="1293.400" y="870"/><use href="#t" x="1473" y="870"/><use href="#t" x="1652.600" y="870"/><use href="#t" x="1832.200" y="870"/><use href="#t" x="2011.800" y="870"/><use href="#t" x="2191.400" y="870"/><use href="#t" x="2371" y="870"/><use href="#t" x="2550.600" y="870"/></g>
<g transform="translate(0 870)"><use href="#n6" x="574.500"/><use href="#n6" x="933.700"/><use href="#n6" x="1113.300"/><use href="#n6" x="1292.900"/><use href="#n6" x="1472.500"/><use href="#n6" x="1652.100"/><use href="#n6" x="1831.700"/><use href="#n6" x="2011.300"/><use href="#n6" x="2190.900"/><use href="#n6" x="2370.500"/><use href="#n6" x="2550.100"/></g>
<text class="c" x="600.800" y="893" textLength="151" lengthAdjust="spacingAndGlyphs">Cymati..omerun)</text>
<text class="c" x="960" y="893" textLength="151" lengthAdjust="spacingAndGlyphs">Cymati..omerun)</text>
<text class="c" x="1139.600" y="893" textLength="151" lengthAdjust="spacingAndGlyphs">Cymati..omerun)</text>
<text class="c" x="1319.200" y="893" textLength="151" lengthAdjust="spacingAndGlyphs">Cymati..omerun)</text>
<text class="c" x="1498.800" y="893" textLength="145" lengthAdjust="spacingAndGlyphs">Cymati..merun)</text>
<text class="c" x="1678.400" y="893" textLength="151" lengthAdjust="spacingAndGlyphs">Cymati..omerun)</text>
<text class="c" x="1858" y="893" textLength="151" lengthAdjust="spacingAndGlyphs">Cymati..omerun)</text>
<text class="c" x="2037.600" y="893" textLength="151" lengthAdjust="spacingAndGlyphs">Cymati..omerun)</text>
<text class="c" x="2217.200" y="893" textLength="145" lengthAdjust="spacingAndGlyphs">Cymati..merun)</text>
<text class="c" x="2396.800" y="893" textLength="151" lengthAdjust="spacingAndGlyphs">Cymati..omerun)</text>
<text class="c" x="2576.400" y="893" textLength="151" lengthAdjust="spacingAndGlyphs">Cymati..omerun)</text>

<!-- Open Hat -->
<g><use href="#t" x="934.200" y="990"/><use href="#t" x="1113.800" y="990"/><use href="#t" x="1473" y="990"/><use href="#t" x="1652.600" y="990"/><use href="#t" x="1832.200" y="990"/><use href="#t" x="2191.400" y="990"/><use href="#t" x="2371" y="990"/><use href="#t" x="2550.600" y="990"/></g>
<g transform="translate(0 990)"><use href="#n7" x="933.700"/><use href="#n7" x="1113.300"/><use href="#n7" x="1472.500"/><use href="#n7" x="1652.100"/><use href="#n7" x="1831.700"/><use href="#n7" x="2190.900"/><use href="#n7" x="2370.500"/><use href="#n7" x="2550.100"/></g>
<text class="c" x="960" y="1013" textLength="151" lengthAdjust="spacingAndGlyphs">Cymatic..hining)</text>
<text class="c" x="1139.600" y="1013" textLength="151" lengthAdjust="spacingAndGlyphs">Cymatic..hining)</text>
<text class="c" x="1498.800" y="1013" textLength="151" lengthAdjust="spacingAndGlyphs">Cymatic..hining)</text>
<text class="c" x="1678.400" y="1013" textLength="151" lengthAdjust="spacingAndGlyphs">Cymatic..hining)</text>
<text class="c" x="1858" y="1013" textLength="151" lengthAdjust="spacingAndGlyphs">Cymatic..hining)</text>
<text class="c" x="2217.200" y="1013" textLength="151" lengthAdjust="spacingAndGlyphs">Cymatic..hining)</text>
<text class="c" x="2396.800" y="1013" textLength="151" lengthAdjust="spacingAndGlyphs">Cymatic..hining)</text>
<text class="c" x="2576.400" y="1013" textLength="151" lengthAdjust="spacingAndGlyphs">Cymatic..hining)</text>

<!-- Open Hat 2 -->
<g><use href="#t" x="934.200" y="1110"/><use href="#t" x="1113.800" y="1110"/><use href="#t" x="1652.600" y="1110"/><use href="#t" x="1832.200" y="1110"/><use href="#t" x="2371" y="1110"/><use href="#t" x="2550.600" y="1110"/></g>
<g transform="translate(0 1110)"><use href="#n8" x="933.700"/><use href="#n8" x="1113.300"/><use href="#n8" x="1652.100"/><use href="#n8" x="1831.700"/><use href="#n8" x="2370.500"/><use href="#n8" x="2550.100"/></g>
<text class="c" x="960" y="1133" textLength="150" lengthAdjust="spacingAndGlyphs">Cymatic..ing) #2</text>
<text class="c" x="1139.600" y="1133" textLength="150" lengthAdjust="spacingAndGlyphs">Cymatic..ing) #2</text>
<text class="c" x="1678.400" y="1133" textLength="150" lengthAdjust="spacingAndGlyphs">Cymatic..ing) #2</text>
<text class="c" x="1858" y="1133" textLength="150" lengthAdjust="spacingAndGlyphs">Cymatic..ing) #2</text>
<text class="c" x="2396.800" y="1133" textLength="150" lengthAdjust="spacingAndGlyphs">Cymatic..ing) #2</text>
<text class="c" x="2576.400" y="1133" textLength="150" lengthAdjust="spacingAndGlyphs">Cymatic..ing) #2</text>

<!-- automation -->
<rect x="574.500" y="1231" width="2155.200" height="30" rx="2" fill="url(#tl)"/>
<circle cx="579.500" cy="1251" r="2.500" fill="none" stroke="#e6efee" stroke-width="1.800"/><circle cx="592" cy="1238.500" r="3" fill="none" stroke="#e6efee" stroke-width="1.800"/><path d="M581.500 1249 590 1240.500" stroke="#e6efee" stroke-width="1.800"/>
<text class="a" x="601" y="1252" textLength="163" style="fill:#d9e6e4" lengthAdjust="spacingAndGlyphs">Master - Volume</text>
<path d="M574.500 1279H2695C2712 1296 2722 1322 2729.700 1348" fill="none" stroke="#cfe6e3" stroke-width="1.600"/>

<!-- FX -->
<g transform="translate(0 1350)"><use href="#sb" x="709.200"/><use href="#sb" x="888.800"/><use href="#sb" x="1248"/><use href="#sb" x="1607.200"/><use href="#sb" x="1966.400"/><use href="#sb" x="2325.600"/></g>
<text class="g" x="735" y="1372" textLength="57" lengthAdjust="spacingAndGlyphs">[SB..3</text>
<text class="g" x="914.800" y="1372" textLength="57" lengthAdjust="spacingAndGlyphs">[SB..3</text>
<text class="g" x="1274" y="1372" textLength="57" lengthAdjust="spacingAndGlyphs">[SB..3</text>
<text class="g" x="1633.200" y="1372" textLength="57" lengthAdjust="spacingAndGlyphs">[SB..3</text>
<text class="g" x="1992.400" y="1372" textLength="57" lengthAdjust="spacingAndGlyphs">[SB..3</text>
<text class="g" x="2351.600" y="1372" textLength="57" lengthAdjust="spacingAndGlyphs">[SB..3</text>

<!-- fx 2 -->
<rect x="888.800" y="1471" width="22.500" height="29.500" rx="2" fill="#4f5c50"/><use href="#ar" x="891" y="1486"/>
<path d="M888.800 1536V1555C892 1550 898 1547.500 911 1547V1546C898 1545.500 892 1542 888.800 1536Z" fill="#cdd6cc"/>
<rect x="928" y="1471" width="39.500" height="29.500" rx="2" fill="#5b6150"/><use href="#ar" x="930" y="1486"/>
<path d="M935 1527.500C936 1538 938 1542 948 1545.500L967.500 1546V1547L948 1547.500C938 1551 936 1555 935 1564C934 1555 932 1551 928 1546.500C932 1542 934 1538 935 1527.500Z" fill="#cdd6cc"/>
<rect x="1647" y="1471" width="39.500" height="29.500" rx="2" fill="#5b6150"/><use href="#ar" x="1649" y="1486"/>
<path d="M1654 1527.500C1655 1538 1657 1542 1667 1545.500L1686.500 1546V1547L1667 1547.500C1657 1551 1655 1555 1654 1564C1653 1555 1651 1551 1647 1546.500C1651 1542 1653 1538 1654 1527.500Z" fill="#cdd6cc"/>
<rect x="2366" y="1471" width="39.500" height="29.500" rx="2" fill="#5b6150"/><use href="#ar" x="2368" y="1486"/>
<path d="M2373 1527.500C2374 1538 2376 1542 2386 1545.500L2405.500 1546V1547L2386 1547.500C2376 1551 2374 1555 2373 1564C2372 1555 2370 1551 2366 1546.500C2370 1542 2372 1538 2373 1527.500Z" fill="#cdd6cc"/>

<!-- track headers -->
<path d="M352 142H540a12 12 0 0 1 12 12V256a12 12 0 0 1-12 12H352Z" fill="url(#lp)"/>
<path d="M352 247 L364 262V268H352Z" fill="#39434a"/>
<rect x="554.500" y="143.500" width="17" height="115.500" rx="1.500" fill="#2f3e47" stroke="#a9d649" stroke-width="2.500"/>
<circle cx="367" cy="158" r="9" fill="#eef2f4"/><path d="M363 163.500 367 152 371 163.500M364.500 160h5" fill="none" stroke="#3f5462" stroke-width="1.800"/>
<text x="383" y="167" font-size="27" fill="#e9eff2" textLength="49" lengthAdjust="spacing">loop</text>
<rect x="440" y="183" width="108" height="35.500" rx="9" fill="#475c69"/>
<g fill="#f0f3f5"><path d="M453 197H459V193L466 203 459 212V208H453Z"/><path d="M465 194Q472 196 471 203T465 212" fill="none" stroke="#f0f3f5" stroke-width="2"/>
<path d="M488 199H492L496 193V213L492 207H488Z" fill="none" stroke="#f0f3f5" stroke-width="2"/><polygon points="498,196 506,203 498,210"/><circle cx="530" cy="203" r="5"/>
<use href="#wi" transform="translate(442 226) scale(.76 .92)"/><polygon points="488,238 507,238 497.500,248"/></g>
<use href="#dt" y="142"/>
<use href="#led" x="530" y="242"/>

<g fill="#45494d">
<use href="#hd" y="270"/><use href="#hd" y="390"/><use href="#hd" y="510"/><use href="#hd" y="630"/><use href="#hd" y="750"/><use href="#hd" y="870"/><use href="#hd" y="990"/><use href="#hd" y="1110" fill="#434744"/>
</g>
<g fill="#4a5158"><use href="#hd" y="1230"/><use href="#hd" y="1350"/><use href="#hd" y="1470"/></g>
<path d="M352 1590H540a12 12 0 0 1 12 12V1626H352Z" fill="#4a5158"/>
<g><use href="#dt" y="270"/><use href="#dt" y="390"/><use href="#dt" y="510"/><use href="#dt" y="630"/><use href="#dt" y="750"/><use href="#dt" y="870"/><use href="#dt" y="990"/><use href="#dt" y="1110"/><use href="#dt" y="1230"/><use href="#dt" y="1350"/><use href="#dt" y="1470"/></g>
<g><use href="#nt" x="485" y="354"/><use href="#nt" x="485" y="474"/><use href="#nt" x="485" y="594"/><use href="#nt" x="485" y="714"/><use href="#nt" x="485" y="834"/><use href="#nt" x="485" y="954"/><use href="#nt" x="485" y="1074"/><use href="#nt" x="485" y="1194"/></g>
<g><use href="#led" x="530" y="370.500"/><use href="#led" x="530" y="490.500"/><use href="#led" x="530" y="610.500"/><use href="#led" x="530" y="730.500"/><use href="#led" x="530" y="850.500"/><use href="#led" x="530" y="970.500"/><use href="#led" x="530" y="1090.500"/><use href="#led" x="530" y="1210.500"/><use href="#led" x="530" y="1330.500"/><use href="#led" x="530" y="1450.500"/><use href="#led" x="530" y="1570.500"/></g>

<text class="h" x="357" y="295" textLength="170" lengthAdjust="spacingAndGlyphs">Cymatics - 808</text>
<text class="h" x="357" y="325" textLength="120" lengthAdjust="spacingAndGlyphs">Actress (C)</text>
<text class="h" x="357" y="415" textLength="158" lengthAdjust="spacingAndGlyphs">! 808 [ Spinz ]</text>
<text class="h" x="357" y="535" textLength="176" lengthAdjust="spacingAndGlyphs">Cymatics - Kick</text>
<text class="h" x="357" y="565" textLength="84" lengthAdjust="spacingAndGlyphs">(Memo)</text>
<text class="h" x="357" y="655" textLength="120" lengthAdjust="spacingAndGlyphs">Cymatics -</text>
<text class="h" x="357" y="685" textLength="140" lengthAdjust="spacingAndGlyphs">Destiny Clap</text>
<text class="h" x="357" y="775" textLength="156" lengthAdjust="spacingAndGlyphs">Snare [ Go 2 ]</text>
<text class="h" x="357" y="895" textLength="188" lengthAdjust="spacingAndGlyphs">Cymatics - Hihat</text>
<text class="h" x="357" y="925" textLength="117" lengthAdjust="spacingAndGlyphs">(Homerun)</text>
<text class="h" x="357" y="1015" textLength="189" lengthAdjust="spacingAndGlyphs">Cymatics - Open</text>
<text class="h" x="357" y="1045" textLength="160" lengthAdjust="spacingAndGlyphs">Hat (Shining)</text>
<text class="h" x="357" y="1135" textLength="189" lengthAdjust="spacingAndGlyphs">Cymatics - Open</text>
<text class="h" x="357" y="1165" textLength="189" lengthAdjust="spacingAndGlyphs">Hat (Shining) #2</text>
<text class="h" x="356" y="1255" textLength="94" lengthAdjust="spacingAndGlyphs">Track 11</text>
<text class="h" x="356" y="1375" textLength="26" lengthAdjust="spacingAndGlyphs">FX</text>
<text class="h" x="356" y="1495" textLength="43" lengthAdjust="spacingAndGlyphs">fx 2</text>
<text class="h" x="356" y="1615" textLength="94" style="fill:#7f8a90" lengthAdjust="spacingAndGlyphs">Track 14</text>

<!-- vertical scrollbar -->
<rect x="2845" y="100" width="35" height="1540" fill="#3f474e"/>
<rect x="2847" y="102" width="33" height="1486" fill="url(#ht)"/>
<rect x="2847" y="102" width="33" height="37" fill="#4a5158" stroke="#565d64" stroke-width="1.500"/>
<path d="M2860 124 2866 117 2872 124" fill="none" stroke="#1d2328" stroke-width="2.500"/>
<rect x="2847" y="141" width="33" height="66" fill="#4d545b"/>
<rect x="2847" y="1588" width="33" height="38" fill="#50575f" stroke="#5c646b" stroke-width="1.500"/>
<path d="M2859 1605 2866 1612 2873 1605" fill="none" stroke="#1d2328" stroke-width="2.500"/>
<rect x="350" y="1626" width="2497" height="2" fill="#222a30"/>
<rect x="2845" y="141" width="2" height="1487" fill="#222a30"/>
</svg>
</body></html>
